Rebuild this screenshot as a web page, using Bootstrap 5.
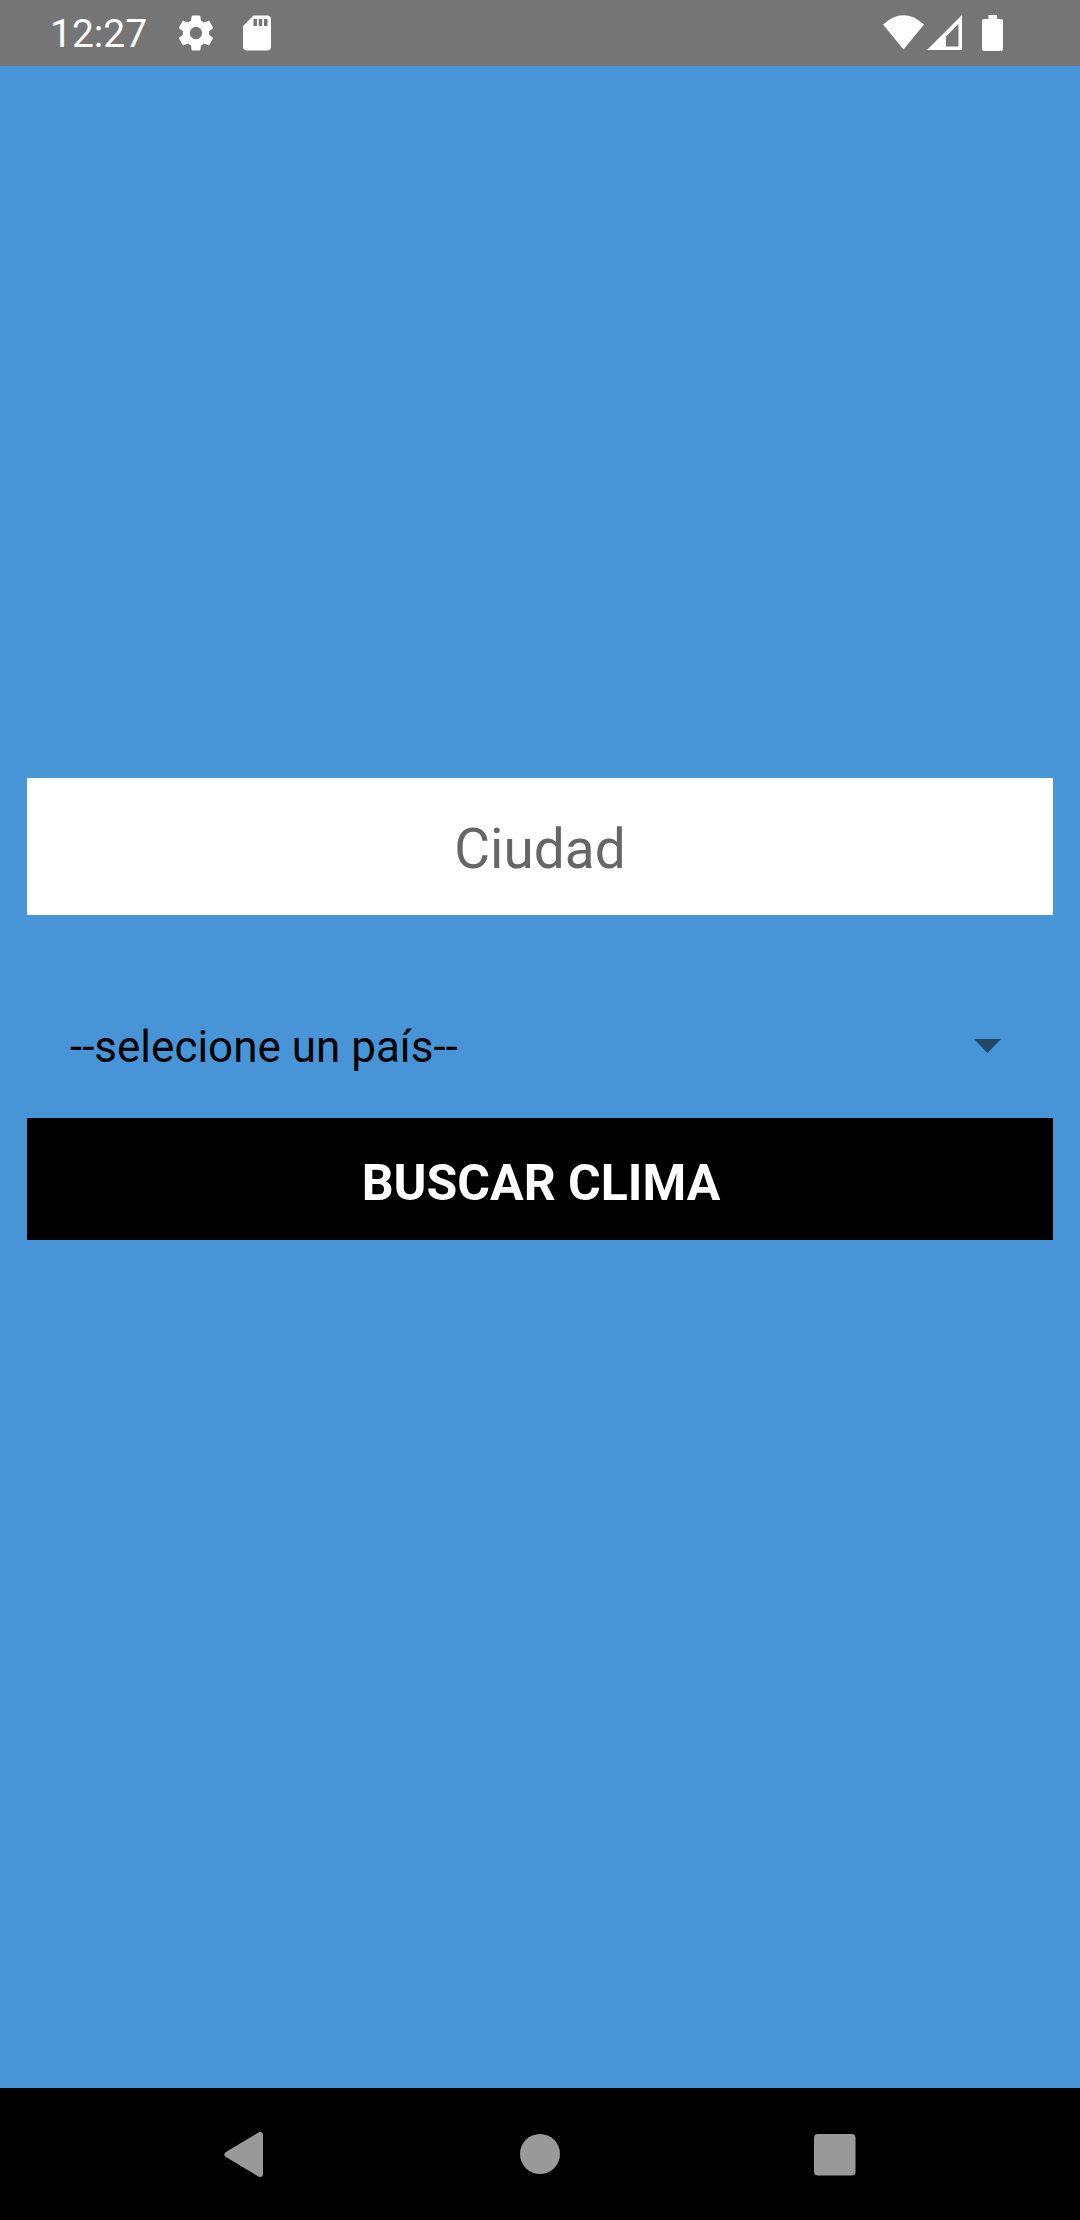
<!DOCTYPE html>
<html lang="es">
<head>
<meta charset="utf-8">
<meta name="viewport" content="width=device-width, initial-scale=1">
<title>Clima</title>
<link href="https://cdn.jsdelivr.net/npm/bootstrap@5.3.0/dist/css/bootstrap.min.css" rel="stylesheet">
<style>
body { font-family: Roboto, "Noto Sans", sans-serif; background: #4795d6; }
.screen { height: 2220px; }
.status-bar { height: 66px; background: #757575; padding: 0 77px 0 50px; }
.clock { font-size: 39px; line-height: 66px; padding-top: 2px; width: 125px; }
.status-icons { gap: 19px; }
.app-body { padding: 712px 27px 0; }
.city-field { height: 137px; font-size: 55px; line-height: 1; padding: 5px 0 0; color: #000; }
.city-field::placeholder { color: #666; opacity: 1; }
.country-picker { height: 144px; margin-top: 59px; padding: 0 52px 0 43px; font-size: 44px; line-height: 1; color: #000; }
.country-picker span { padding-top: 2px; }
.search-btn { height: 122px; padding: 7px 0 0 2px; font-size: 50px; line-height: 1; --bs-btn-bg: #000; --bs-btn-color: #fff; --bs-btn-hover-bg: #111; --bs-btn-hover-color: #fff; }
.nav-keys { height: 132px; color: #999; }
svg { display: block; fill: currentColor; }
</style>
</head>
<body>
<div class="screen d-flex flex-column overflow-hidden">
  <header class="status-bar d-flex align-items-center justify-content-between text-white">
    <div class="d-flex align-items-center">
      <span class="clock">12:27</span>
      <div class="status-icons d-flex">
        <svg width="42" height="42" viewBox="0 0 24 24"><path d="M19.43 12.98c.04-.32.07-.64.07-.98s-.03-.66-.07-.98l2.11-1.65c.19-.15.24-.42.12-.64l-2-3.46c-.12-.22-.39-.3-.61-.22l-2.49 1c-.52-.4-1.08-.73-1.69-.98l-.38-2.65C14.46 2.18 14.25 2 14 2h-4c-.25 0-.46.18-.49.42l-.38 2.65c-.61.25-1.17.59-1.69.98l-2.49-1c-.23-.09-.49 0-.61.22l-2 3.46c-.13.22-.07.49.12.64l2.11 1.65c-.04.32-.07.65-.07.98s.03.66.07.98l-2.11 1.65c-.19.15-.24.42-.12.64l2 3.46c.12.22.39.3.61.22l2.49-1c.52.4 1.08.73 1.69.98l.38 2.65c.03.24.24.42.49.42h4c.25 0 .46-.18.49-.42l.38-2.65c.61-.25 1.17-.59 1.69-.98l2.49 1c.23.09.49 0 .61-.22l2-3.46c.12-.22.07-.49-.12-.64l-2.11-1.65zM12 15.5c-1.93 0-3.5-1.57-3.5-3.5s1.57-3.5 3.5-3.5 3.5 1.57 3.5 3.5-1.57 3.5-3.5 3.5z"/></svg>
        <svg width="42" height="42" viewBox="0 0 24 24"><path d="M18 2h-8L4.02 8 4 20c0 1.1.9 2 2 2h12c1.1 0 2-.9 2-2V4c0-1.1-.9-2-2-2zm-6 6h-2V4h2v4zm3 0h-2V4h2v4zm3 0h-2V4h2v4z"/></svg>
      </div>
    </div>
    <svg width="121" height="66" viewBox="882 0 121 66">
      <path d="M883 24.500Q903.500 6 924 24.500L903.500 49.500Z"/>
      <path fill-rule="evenodd" d="M962 15V50H927ZM958.500 24L946 36.500V46.500H958.500Z"/>
      <path d="M988.500 15h8.500v4h4a2 2 0 0 1 2 2v28a2 2 0 0 1-2 2h-17a2 2 0 0 1-2-2V21a2 2 0 0 1 2-2h4.500z"/>
    </svg>
  </header>

  <main class="app-body flex-grow-1">
    <input class="city-field form-control rounded-0 border-0 text-center bg-white" type="text" placeholder="Ciudad" aria-label="Ciudad">
    <div class="country-picker d-flex align-items-center justify-content-between" role="button">
      <span>--selecione un país--</span>
      <svg width="27" height="14" viewBox="0 0 27 14"><path fill="#214965" d="M0 0H27L13.500 14Z"/></svg>
    </div>
    <button class="search-btn btn w-100 rounded-0 border-0 fw-bold" type="button">BUSCAR CLIMA</button>
  </main>

  <nav class="nav-keys bg-black d-flex justify-content-center">
    <svg width="1080" height="132" viewBox="0 0 1080 132">
      <path d="M227.500 66.500L260 47V86Z" stroke="currentColor" stroke-width="6" stroke-linejoin="round"/>
      <circle cx="540" cy="66" r="20"/>
      <rect x="814" y="46" width="41.500" height="41.500" rx="4"/>
    </svg>
  </nav>
</div>
<script src="https://cdn.jsdelivr.net/npm/bootstrap@5.3.0/dist/js/bootstrap.bundle.min.js"></script>
</body>
</html>
